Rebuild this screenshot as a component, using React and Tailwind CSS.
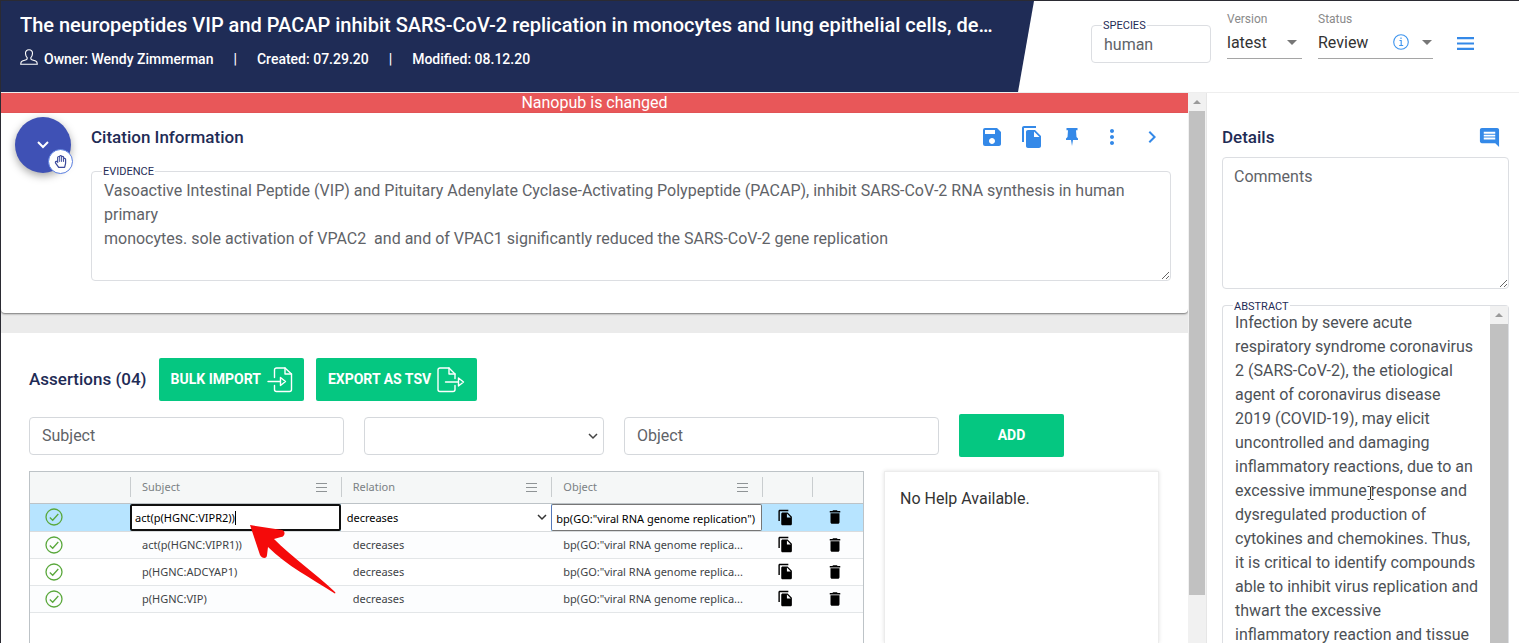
import React from "react";
import { MdSave, MdFileCopy, MdMoreVert, MdChevronRight, MdComment, MdDelete, MdArrowDropDown } from "react-icons/md";
import { FaRegHandPaper } from "react-icons/fa";

const rows = [
  { subject: "act(p(HGNC:VIPR1))", bg: "bg-[#fcfdfe]" },
  { subject: "p(HGNC:ADCYAP1)", bg: "bg-white" },
  { subject: "p(HGNC:VIP)", bg: "bg-[#fcfdfe]" },
];

const evidence =
  "Vasoactive Intestinal Peptide (VIP) and Pituitary Adenylate Cyclase-Activating Polypeptide (PACAP), inhibit SARS-CoV-2 RNA synthesis in human primary\nmonocytes. sole activation of VPAC2  and and of VPAC1 significantly reduced the SARS-CoV-2 gene replication";

const abstractText =
  "Infection by severe acute respiratory syndrome coronavirus 2 (SARS-CoV-2), the etiological agent of coronavirus disease 2019 (COVID-19), may elicit uncontrolled and damaging inflammatory reactions, due to an excessive immune response and dysregulated production of cytokines and chemokines. Thus, it is critical to identify compounds able to inhibit virus replication and thwart the excessive inflammatory reaction and tissue";

function PersonIcon() {
  return (
    <svg width="18" height="16" viewBox="0 0 18 16" fill="none" stroke="currentColor" strokeWidth="1.1" className="mb-1" aria-hidden="true">
      <path d="M9 .7C6.6.7 5.4 2.3 5.5 4.4c.1 2 .8 3.6 1.7 4.3.3 1.300-.1 1.700-1 2L2.300 12C1.200 12.500.7 13.600.7 15.200H17.300c0-1.600-.5-2.700-1.600-3.200L11.800 10.700c-.9-.3-1.300-.7-1-2 .9-.7 1.600-2.300 1.700-4.300C12.600 2.300 11.400.7 9 .7Z" />
    </svg>
  );
}

function PinIcon() {
  return (
    <svg width="20" height="20" viewBox="0 0 20 20" fill="currentColor" aria-hidden="true">
      <path d="M4.500 1h11v2.200H14l.5 6.800 1.500 1.500v1.500h-5L10 19l-1-6H4v-1.500L5.500 10 6 3.200H4.500Z" />
    </svg>
  );
}

function ImportIcon() {
  return (
    <svg width="26" height="26" viewBox="0 0 26 26" fill="none" stroke="currentColor" strokeWidth="1.4" strokeLinejoin="round" strokeLinecap="round" aria-hidden="true">
      <path d="M7.500 10.500V3a2 2 0 0 1 2-2H18l6.500 6v15.500a2 2 0 0 1-2 2h-13a2 2 0 0 1-2-2V18.500" />
      <path d="M18 1v6h6.500M1 14.500h12.500M13.500 10.500v8l5-4Z" />
    </svg>
  );
}

function ExportIcon() {
  return (
    <svg width="28" height="26" viewBox="0 0 28 26" fill="none" stroke="currentColor" strokeWidth="1.4" strokeLinejoin="round" strokeLinecap="round" aria-hidden="true">
      <path d="M18 11.500V7l-6-6H3a2 2 0 0 0-2 2v19.500a2 2 0 0 0 2 2h13a2 2 0 0 0 2-2V18.500" />
      <path d="M12 1v6h6M8.500 15h13M21.500 11v8l5-4Z" />
    </svg>
  );
}

function CheckIcon() {
  return (
    <svg width="18" height="18" viewBox="0 0 18 18" fill="none" stroke="#5aa83c" strokeWidth="1.3" role="img" aria-label="Valid">
      <circle cx="9" cy="9" r="8" />
      <path d="m4.800 9.500 2.900 2.700L13.300 6" />
    </svg>
  );
}

function ChevronDown({ className }) {
  return (
    <svg width="10" height="7" viewBox="0 0 10 7" fill="none" stroke="currentColor" strokeWidth="1.5" className={className} aria-hidden="true">
      <path d="m1 1 4 4 4-4" />
    </svg>
  );
}

function ColumnMenuIcon() {
  return (
    <svg width="11" height="9" viewBox="0 0 11 9" stroke="#8f9496" strokeWidth="1" aria-hidden="true">
      <path d="M0 .5h11M0 4.500h11M0 8.500h11" />
    </svg>
  );
}

function ScrollUp() {
  return (
    <div className="flex h-[18px] shrink-0 items-center justify-center bg-[#f1f1f1]">
      <svg width="8" height="4" viewBox="0 0 8 4" aria-hidden="true">
        <path d="M0 4 4 0l4 4Z" fill="#9a9a9a" />
      </svg>
    </div>
  );
}

function ColumnHead({ label }) {
  return (
    <th className="p-0 font-normal">
      <div className="flex h-5 items-center justify-between border-l border-[#c9cdcf] pr-3.5 pl-[11px] text-[#7b8184]">
        {label}
        <button type="button" aria-label={label + " column menu"}>
          <ColumnMenuIcon />
        </button>
      </div>
    </th>
  );
}

function RowActions() {
  return (
    <>
      <td className="p-0 text-black">
        <button type="button" aria-label="Copy assertion" className="block pl-[15px]">
          <MdFileCopy size={17} />
        </button>
      </td>
      <td className="p-0 text-black">
        <button type="button" aria-label="Delete assertion" className="block pl-[14px]">
          <MdDelete size={18} />
        </button>
      </td>
    </>
  );
}

function Header() {
  return (
    <header className="flex h-[92px] shrink-0 border-b border-[#eeeeee] bg-white">
      <div className="min-w-0 flex-1 bg-[#1f2c56] pt-2.5 pr-6 pl-[19px] text-white [clip-path:polygon(0_0,100%_0,calc(100%-16px)_100%,0_100%)]">
        <h1 className="truncate text-[20px] leading-7 font-medium">
          The neuropeptides VIP and PACAP inhibit SARS-CoV-2 replication in monocytes and lung epithelial cells, de…
        </h1>
        <div className="mt-2 flex items-center text-[14px] leading-6 font-medium whitespace-nowrap">
          <PersonIcon />
          <span className="ml-1.5">Owner: Wendy Zimmerman</span>
          <span className="mx-5">|</span>
          <span>Created: 07.29.20</span>
          <span className="mx-5">|</span>
          <span>Modified: 08.12.20</span>
        </div>
      </div>
      <div className="flex w-[485px] shrink-0 pr-[45px] pl-[57px]">
        <div className="relative mt-6 h-[38px] w-[120px] rounded border border-[#dcdee2]">
          <label htmlFor="species" className="absolute -top-1.5 left-2.5 bg-white px-px text-[11px] leading-3 text-[#1f2c56]">
            SPECIES
          </label>
          <input id="species" defaultValue="human" className="h-full w-full px-3 text-[16px] text-[#5f6368] outline-none" />
        </div>
        <div className="ml-4 w-[75px] pt-2.5">
          <label htmlFor="version" className="block text-[12px] leading-4 text-[#8a8a8a]">
            Version
          </label>
          <div className="relative mt-0.5 h-[30px] border-b border-[#a5a5a5]">
            <select id="version" className="h-7 w-full appearance-none bg-transparent text-[16px] text-[#333] outline-none">
              <option>latest</option>
            </select>
            <MdArrowDropDown size={24} className="pointer-events-none absolute top-px -right-0.5 text-[#777]" />
          </div>
        </div>
        <div className="ml-4 w-[115px] pt-2.5">
          <label htmlFor="status" className="block text-[12px] leading-4 text-[#8a8a8a]">
            Status
          </label>
          <div className="relative mt-0.5 h-[30px] border-b border-[#a5a5a5]">
            <select id="status" className="h-7 w-full appearance-none bg-transparent text-[16px] text-[#333] outline-none">
              <option>Review</option>
            </select>
            <svg width="16" height="16" viewBox="0 0 16 16" fill="none" stroke="#3d94ee" strokeWidth="1.1" className="absolute top-[5px] right-6" aria-hidden="true">
              <circle cx="8" cy="8" r="7.3" />
              <path d="M6.500 6.500H8.200V11.500M6.200 11.500h4M8 3.500v1.500" />
            </svg>
            <MdArrowDropDown size={24} className="pointer-events-none absolute top-px -right-1.5 text-[#777]" />
          </div>
        </div>
        <button type="button" aria-label="Menu" className="mt-9 ml-auto self-start text-[#3489e8]">
          <svg width="17" height="13" viewBox="0 0 17 13" stroke="currentColor" strokeWidth="2.2" aria-hidden="true">
            <path d="M0 1.200h17M0 6.500h17M0 11.800h17" />
          </svg>
        </button>
      </div>
    </header>
  );
}

function Citation() {
  return (
    <section className="relative z-10 rounded-b bg-white pt-2.5 pr-[17px] pb-8 pl-[90px] shadow-[0_1px_2px_rgba(0,0,0,0.5)]">
      <button type="button" aria-label="Collapse" className="absolute top-1 left-[14px] flex h-14 w-14 items-center justify-center rounded-full bg-[#3f51b5] text-white shadow-[0_3px_8px_rgba(0,0,0,0.35)]">
        <svg width="12" height="8" viewBox="0 0 12 8" fill="none" stroke="currentColor" strokeWidth="2" aria-hidden="true">
          <path d="m1 1 5 5 5-5" />
        </svg>
        <span className="absolute -right-0.5 -bottom-px flex h-[25px] w-[25px] items-center justify-center rounded-full border border-[#5b7fe0] bg-white text-[#3c4a9c]">
          <FaRegHandPaper size={13} />
        </span>
      </button>
      <div className="flex items-center justify-between">
        <h2 className="text-[17px] leading-7 font-medium text-[#1f2c56]">Citation Information</h2>
        <div className="flex items-center gap-4 pr-[7px] text-[#3489e8]">
          <button type="button" aria-label="Save"><MdSave size={24} /></button>
          <button type="button" aria-label="Duplicate"><MdFileCopy size={24} /></button>
          <button type="button" aria-label="Pin" className="flex w-6 justify-center"><PinIcon /></button>
          <button type="button" aria-label="More"><MdMoreVert size={24} /></button>
          <button type="button" aria-label="Next"><MdChevronRight size={24} /></button>
        </div>
      </div>
      <div className="relative mt-5">
        <label htmlFor="evidence" className="absolute -top-[5px] left-[11px] bg-white px-px text-[11px] leading-3 text-[#1f2c56]">
          EVIDENCE
        </label>
        <textarea id="evidence" defaultValue={evidence} className="block h-[110px] w-full rounded border border-[#dcdee2] px-3 py-[7px] text-[16px] leading-6 text-[#5f6368] outline-none" />
      </div>
    </section>
  );
}

function Assertions() {
  const field = "h-[38px] rounded border border-[#d5d8dc] px-3 text-[16px] text-[#555] outline-none placeholder:text-[#5f6368]";
  const green = "flex h-[43px] items-center rounded-xs bg-[#05c781] text-[14px] font-bold text-white";
  return (
    <section className="mt-5 flex min-h-0 flex-1 flex-col bg-white pt-[25px] pr-[29px] pl-7">
      <div className="flex items-center gap-3">
        <h2 className="text-[17px] font-medium text-[#1f2c56]">Assertions (04)</h2>
        <button type="button" className={green + " gap-1.5 pr-[11px] pl-3"}>
          BULK IMPORT <ImportIcon />
        </button>
        <button type="button" className={green + " gap-1.5 px-3"}>
          EXPORT AS TSV <ExportIcon />
        </button>
      </div>
      <form className="mt-[13px] flex items-center gap-5" onSubmit={(e) => e.preventDefault()}>
        <input aria-label="Subject" placeholder="Subject" className={field + " w-[315px]"} />
        <div className="relative w-[240px]">
          <select aria-label="Relation" className={field + " block w-full appearance-none"}>
            <option></option>
          </select>
          <ChevronDown className="pointer-events-none absolute top-4 right-1.5 text-[#444]" />
        </div>
        <input aria-label="Object" placeholder="Object" className={field + " w-[315px]"} />
        <button type="submit" className={green + " w-[105px] justify-center"}>
          ADD
        </button>
      </form>
      <div className="mt-3.5 flex min-h-0 flex-1 gap-5">
        <div className="relative min-w-0 flex-1 border-x border-t border-[#bdc3c7] font-['Noto_Sans','Open_Sans',sans-serif] text-[11px] text-[#3f4447]">
          <table className="w-full table-fixed border-collapse text-left">
            <colgroup>
              <col className="w-[100px]" />
              <col />
              <col />
              <col />
              <col className="w-[50px]" />
              <col className="w-[51px]" />
            </colgroup>
            <thead>
              <tr className="h-[31px] border-b border-[#bdc3c7] bg-[#f5f7f7]">
                <th className="p-0" aria-label="State" />
                <ColumnHead label="Subject" />
                <ColumnHead label="Relation" />
                <ColumnHead label="Object" />
                <th className="p-0" aria-label="Copy"><div className="h-5 border-l border-[#c9cdcf]" /></th>
                <th className="p-0" aria-label="Delete"><div className="h-5 border-l border-[#c9cdcf]" /></th>
              </tr>
            </thead>
            <tbody>
              <tr className="h-[27px] border-b border-[#d9dcde] bg-[#b7e4ff] text-black">
                <td className="p-0 pl-[15px]"><CheckIcon /></td>
                <td className="p-0">
                  <div className="flex h-[27px] items-center rounded-xs border-2 border-[#101010] bg-white px-[3px] pt-0.5">
                    <input aria-label="Subject value" defaultValue="act(p(HGNC:VIPR2))" className="field-sizing-content outline-none" />
                    <span className="h-3.5 w-px bg-black" />
                  </div>
                </td>
                <td className="p-0">
                  <div className="relative h-[27px] bg-white">
                    <select aria-label="Relation value" className="h-full w-full appearance-none px-1.5 pt-0.5 outline-none">
                      <option>decreases</option>
                    </select>
                    <ChevronDown className="pointer-events-none absolute top-2.5 right-1 text-[#333]" />
                  </div>
                </td>
                <td className="p-0">
                  <input aria-label="Object value" defaultValue={'bp(GO:"viral RNA genome replication")'} className="block h-[27px] w-full rounded-xs border border-[#767676] border-l-[#5578b8] bg-white px-1 pt-0.5 outline-none" />
                </td>
                <RowActions />
              </tr>
              {rows.map((r) => (
                <tr key={r.subject} className={"h-[27px] border-b border-[#e3e6e8] " + r.bg}>
                  <td className="p-0 pl-[15px]"><CheckIcon /></td>
                  <td className="p-0 pt-0.5 pl-3">{r.subject}</td>
                  <td className="p-0 pt-0.5 pl-3">decreases</td>
                  <td className="p-0 pt-0.5 pl-3">bp(GO:"viral RNA genome replica...</td>
                  <RowActions />
                </tr>
              ))}
            </tbody>
          </table>
          <svg width="88" height="72" viewBox="0 0 88 72" className="pointer-events-none absolute top-[52px] left-[219px]" aria-hidden="true">
            <path d="M1 1 33 6c4 1 3 7-1 7l-7 2C43 33 66 49 86 68c1 1 0 2-1 1C62 54 38 42 19 23l-1 8c0 4-5 4-7 0Z" fill="#f50a0a" />
          </svg>
        </div>
        <aside className="w-[275px] shrink-0 border-x border-t border-[#ececec] px-[15px] pt-[15px] text-[16px] leading-6 text-[#333] shadow-[0_0_4px_rgba(0,0,0,0.12)]">
          No Help Available.
        </aside>
      </div>
    </section>
  );
}

function Details() {
  return (
    <aside className="flex w-[313px] shrink-0 flex-col border-l border-[#e6e6e6] bg-white pt-8 pr-2.5 pl-[15px]">
      <div className="flex items-center justify-between">
        <h2 className="text-[17px] leading-6 font-medium text-[#1f2c56]">Details</h2>
        <button type="button" aria-label="Comments" className="mr-2 text-[#3489e8]">
          <MdComment size={23} />
        </button>
      </div>
      <textarea aria-label="Comments" placeholder="Comments" className="mt-2 block h-[132px] w-full shrink-0 rounded border border-[#dcdee2] px-[11px] py-[7px] text-[16px] leading-6 outline-none placeholder:text-[#5f6368]" />
      <div className="relative mt-4 flex min-h-0 flex-1 rounded-t border-x border-t border-[#dcdee2]">
        <label htmlFor="abstract" className="absolute -top-[5px] left-2.5 bg-white px-px text-[11px] leading-3 text-[#1f2c56]">
          ABSTRACT
        </label>
        <textarea id="abstract" readOnly defaultValue={abstractText} className="min-w-0 flex-1 resize-none pt-[5px] pr-[11px] pl-3 text-[16px] leading-6 text-[#4d5156] outline-none [scrollbar-width:none]" />
        <div className="flex w-[18px] shrink-0 flex-col">
          <ScrollUp />
          <div className="flex-1 bg-[#c1c1c1]" />
        </div>
        <svg width="7" height="14" viewBox="0 0 7 14" fill="none" stroke="#333" className="absolute top-[180px] left-[144px]" aria-hidden="true">
          <path d="M.5.5h2l1 1 1-1h2M3.500 1v12M.5 13.500h2l1-1 1 1h2" />
        </svg>
      </div>
    </aside>
  );
}

export default function App() {
  return (
    <div className="flex h-screen flex-col overflow-hidden border-t border-l border-[#2b2b33] bg-white font-[Roboto,sans-serif]">
      <Header />
      <div className="flex min-h-0 flex-1">
        <main className="flex min-w-0 flex-1 flex-col overflow-hidden bg-[#ebebeb]">
          <div className="h-5 shrink-0 bg-[#e85759] text-center text-[16px] leading-5 text-white">Nanopub is changed</div>
          <Citation />
          <Assertions />
        </main>
        <div className="flex w-[18px] shrink-0 flex-col bg-[#f1f1f1] px-px">
          <ScrollUp />
          <div className="h-[88%] bg-[#c1c1c1]" />
        </div>
        <Details />
      </div>
    </div>
  );
}
